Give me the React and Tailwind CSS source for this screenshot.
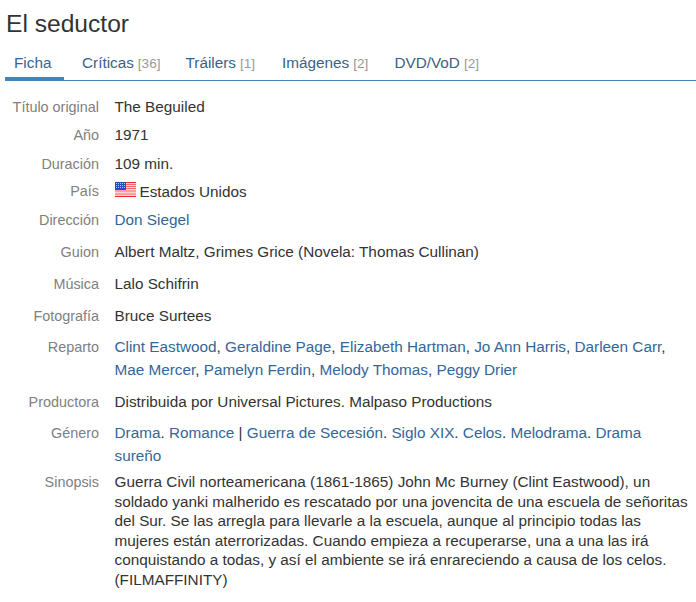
import React from "react";

const TABS = [
  { label: "Ficha", active: true },
  { label: "Críticas", count: "[36]", cls: "pl-[18px]" },
  { label: "Tráilers", count: "[1]", cls: "pl-[25px]" },
  { label: "Imágenes", count: "[2]", cls: "pl-[27px]" },
  { label: "DVD/VoD", count: "[2]", cls: "pl-[26px]" },
];

const A = ({ children }) => <a className="text-[#336699]">{children}</a>;

const UsFlag = () => (
  <svg width="21" height="15" viewBox="0 0 21 15" className="shrink-0 mt-[1px]">
    <rect width="21" height="15" fill="#fbd5d6" />
    <rect y="0" width="21" height="1" fill="#ee2a30" />
    <rect y="2" width="21" height="1" fill="#f6686c" />
    <rect y="4" width="21" height="1" fill="#f6686c" />
    <rect y="6" width="21" height="1" fill="#f6686c" />
    <rect y="8" width="21" height="2" fill="#fb9ea1" />
    <rect y="11" width="21" height="2" fill="#fb9ea1" />
    <rect y="14" width="21" height="1" fill="#ee2a30" />
    <rect y="0" width="11" height="8" fill="#2a4bc0" />
    {[1, 3, 5].map((y) =>
      [1, 3, 5, 7, 9].map((x) => <rect key={`${x}-${y}`} x={x} y={y} width="1" height="1" fill="#b9c6f0" />)
    )}
  </svg>
);

const Row = ({ label, className = "", children }) => (
  <div className={`flex ${className}`}>
    <div className="w-[99px] shrink-0 text-right text-[#808080] text-[14.4px]">{label}</div>
    <div className="pl-[15.5px] pr-[6px] flex-1 text-[#333333]">{children}</div>
  </div>
);

export default function App() {
  return (
    <div className="w-[696px] h-[602px] overflow-hidden bg-white font-['Liberation_Sans',Arial,sans-serif] text-[15.3px] leading-[20px]">
      <h1 className="pl-[6px] pt-[9px] text-[24.6px] leading-[30px] text-[#333333]">El seductor</h1>

      <div className="ml-[5px] mt-[11px] flex border-b border-[#4682b4] h-[31px]">
        {TABS.map((t) => (
          <div
            key={t.label}
            className={`h-[31px] leading-[20px] pt-[3px] ${t.active ? "w-[59px] pl-[9px] border-b-4 border-[#4682b4] text-[#336699]" : `${t.cls} text-[#3b6186]`}`}
          >
            {t.label}
            {t.count && <span className="text-[#999999] text-[13.6px] ml-[4px]">{t.count}</span>}
          </div>
        ))}
      </div>

      <div className="mt-[16px] flex flex-col">
        <Row label="Título original" className="h-[28px]">The Beguiled</Row>
        <Row label="Año" className="h-[29px]">1971</Row>
        <Row label="Duración" className="h-[27px]">109 min.</Row>
        <Row label="País" className="h-[29px]">
          <div className="flex items-start gap-[4px]">
            <UsFlag />
            <span className="pt-[1px]">Estados Unidos</span>
          </div>
        </Row>
        <Row label="Dirección" className="h-[32px]"><A>Don Siegel</A></Row>
        <Row label="Guion" className="h-[32px]">Albert Maltz, Grimes Grice (Novela: Thomas Cullinan)</Row>
        <Row label="Música" className="h-[32px]">Lalo Schifrin</Row>
        <Row label="Fotografía" className="h-[31px]">Bruce Surtees</Row>
        <Row label="Reparto" className="h-[55px]">
          <div className="leading-[23px] -mt-[2px]">
            <A>Clint Eastwood</A>, <A>Geraldine Page</A>, <A>Elizabeth Hartman</A>, <A>Jo Ann Harris</A>, <A>Darleen Carr</A>,{" "}
            <A>Mae Mercer</A>, <A>Pamelyn Ferdin</A>, <A>Melody Thomas</A>, <A>Peggy Drier</A>
          </div>
        </Row>
        <Row label="Productora" className="h-[31px]">Distribuida por Universal Pictures. Malpaso Productions</Row>
        <Row label="Género" className="h-[49px]">
          <div className="leading-[23px] -mt-[2px]">
            <A>Drama</A>. <A>Romance</A> | <A>Guerra de Secesión</A>. <A>Siglo XIX</A>. <A>Celos</A>. <A>Melodrama</A>. <A>Drama sureño</A>
          </div>
        </Row>
        <Row label="Sinopsis">
          <div className="leading-[19.6px]">
            Guerra Civil norteamericana (1861-1865) John Mc Burney (Clint Eastwood), un soldado yanki malherido es rescatado por una jovencita de una escuela de señoritas del Sur. Se las arregla para llevarle a la escuela, aunque al principio todas las mujeres están aterrorizadas. Cuando empieza a recuperarse, una a una las irá conquistando a todas, y así el ambiente se irá enrareciendo a causa de los celos. (FILMAFFINITY)
          </div>
        </Row>
      </div>
    </div>
  );
}
